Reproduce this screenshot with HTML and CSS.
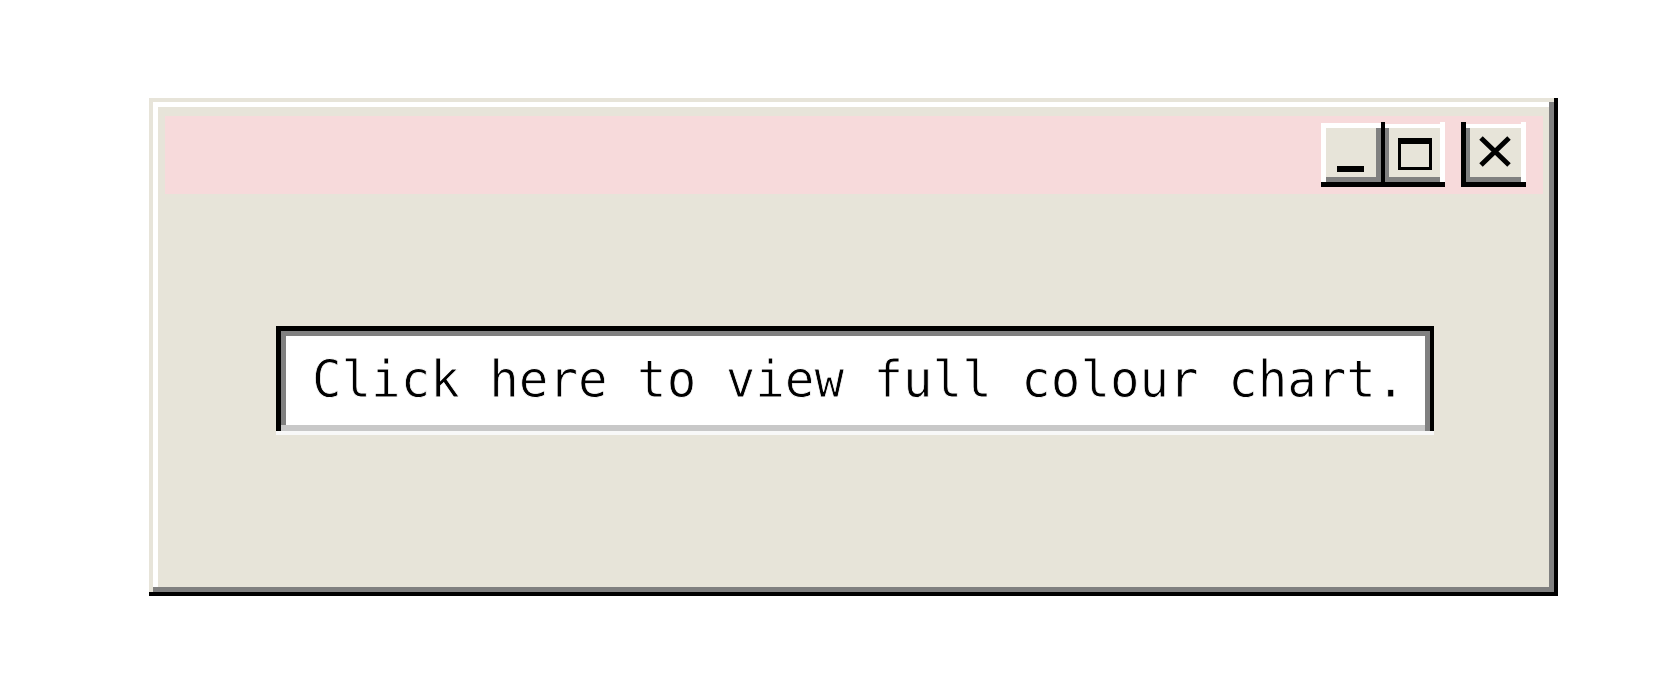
FILE: index.html
```html
<!DOCTYPE html>
<html>
<head>
<meta charset="utf-8">
<link rel="stylesheet" href="styles.css">
</head>
<body>
<div class="stage">
  <div class="window">
    <div class="titlebar">
      <div class="btn btn-min">
        <svg width="60" height="64" viewBox="0 0 60 64"><rect x="16" y="43" width="27" height="6" fill="#000"/></svg>
      </div>
      <div class="btn btn-max">
        <svg width="64" height="65" viewBox="0 0 64 65"><rect x="18.5" y="18" width="31" height="28.5" fill="none" stroke="#000" stroke-width="3"/><rect x="17" y="16" width="34" height="6" fill="#000"/></svg>
      </div>
      <div class="btn btn-close">
        <svg width="65" height="65" viewBox="0 0 65 65"><path d="M20 16 L48 43 M48 16 L20 43" stroke="#000" stroke-width="5" fill="none"/></svg>
      </div>
    </div>
    <div class="content">
      <div class="field"><span class="label">Click here to view full colour chart.</span></div>
    </div>
  </div>
</div>
</body>
</html>
```

FILE: styles.css
```css
html, body {
  margin: 0;
  padding: 0;
  background: #ffffff;
}

.stage {
  padding: 98px 0 0 149px;
}

.window {
  box-sizing: border-box;
  width: 1409px;
  height: 498px;
  background: #e7e4d9;
  padding: 18px 15px 16px 16px;
  box-shadow:
    inset -4px -4px 0 #000000,
    inset 4px 4px 0 #e7e4d9,
    inset -9px -9px 0 #808080,
    inset 9px 9px 0 #ffffff;
}

.titlebar {
  height: 78px;
  background: #f7dadb;
  display: flex;
  justify-content: flex-end;
  align-items: flex-end;
  padding: 0 17px 7px 0;
  box-sizing: border-box;
}

.btn {
  box-sizing: border-box;
  background: #e7e4d9;
  display: flex;
}

.btn svg {
  display: block;
}

.btn-min {
  width: 60px;
  height: 64px;
  box-shadow:
    inset 0 -5px 0 #000000,
    inset 5px 5px 0 #ffffff,
    inset -5px -10px 0 #808080;
}

.btn-max {
  width: 64px;
  height: 65px;
  box-shadow:
    inset 0 -5px 0 #000000,
    inset 4px 0 0 #000000,
    inset -5px 0 0 #ffffff,
    inset 0 2px 0 #f7dadb,
    inset 0 -10px 0 #808080,
    inset 0 6px 0 #ffffff,
    inset 8px 0 0 #808080;
  margin-right: 16px;
}

.btn-close {
  width: 65px;
  height: 65px;
  box-shadow:
    inset 0 -5px 0 #000000,
    inset 5px 0 0 #000000,
    inset -5px 0 0 #ffffff,
    inset 0 2px 0 #f7dadb,
    inset 0 6px 0 #ffffff,
    inset 0 -10px 0 #808080,
    inset 9px 0 0 #808080;
}

.content {
  padding: 132px 0 0 111px;
}

.field {
  box-sizing: border-box;
  width: 1158px;
  height: 109px;
  background: #ffffff;
  padding: 6px 0 10px 36px;
  display: flex;
  align-items: center;
  color: #000000;
  white-space: nowrap;
  box-shadow:
    inset 0 -4px 0 #f8f8f8,
    inset 5px 0 0 #000000,
    inset 0 5px 0 #000000,
    inset -4px 0 0 #000000,
    inset -9px 0 0 #808080,
    inset 0 -10px 0 #c8c8c8,
    inset 10px 0 0 #808080,
    inset 0 10px 0 #808080;
}

.label {
  display: inline-block;
  font-family: "DejaVu Sans Mono", monospace;
  font-size: 52px;
  line-height: 60px;
  transform: scaleX(0.944);
  transform-origin: left center;
  -webkit-text-stroke: 0.8px #ffffff;
}
```
